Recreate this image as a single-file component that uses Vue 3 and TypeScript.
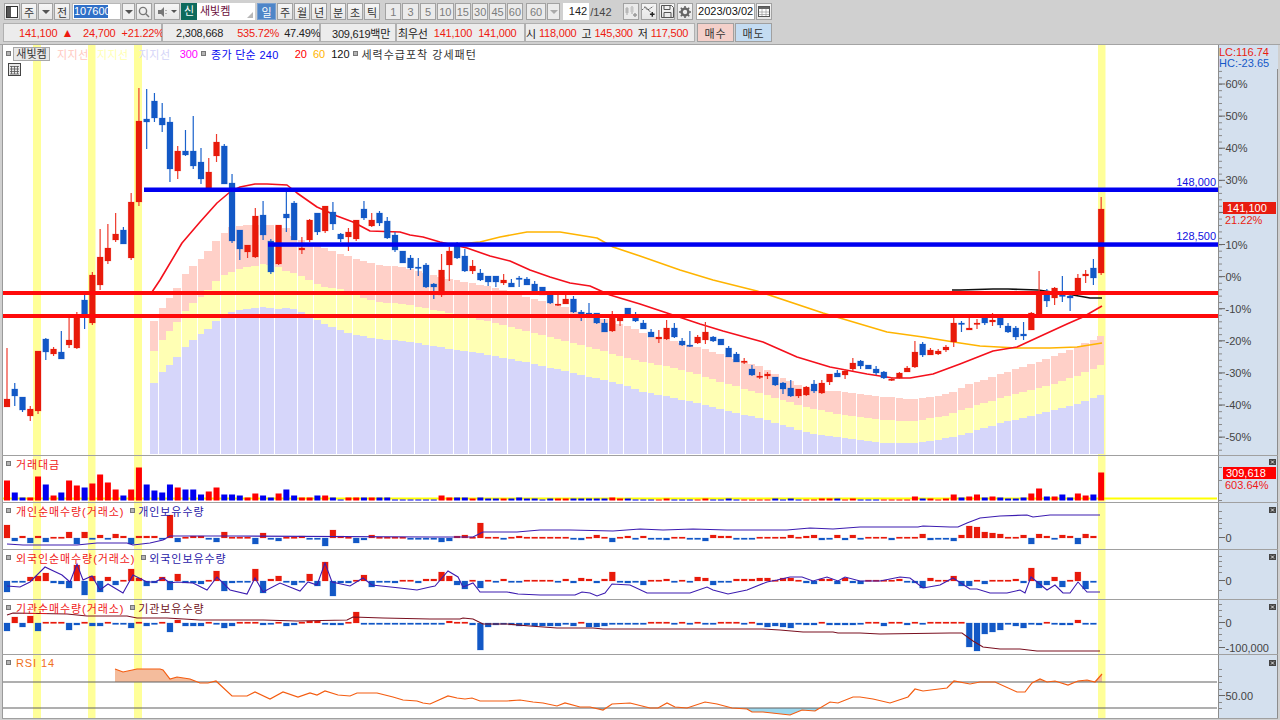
<script setup lang="ts">
type Legend = { text: string; color: string; bullet?: boolean }
type Bar = { x: number; y: number; h: number; up: boolean }

const step = 7.76
const xAt = (i: number) => 7 + step * i
const pts = (a: number[][]) => a.map(p => p.join(',')).join(' ')

// pixel data read from the chart: [up, bodyTop, bodyBottom, high, low]
const candleRows: number[][] = [
  [1,399,407,348,407],[0,389,396,383,406],[0,397,410,397,412],[1,409,416,406,421],[1,351,411,351,414],
  [0,339,352,338,360],[1,349,354,347,356],[0,352,359,331,359],[1,340,345,318,348],[1,318,348,312,349],
  [0,300,314,295,329],[1,275,323,272,325],[1,257,285,229,290],[1,248,261,224,264],[1,234,240,213,242],
  [0,230,244,227,244],[1,202,258,193,260],[1,121,202,88,206],[0,119,122,89,149],[0,101,118,93,122],
  [0,118,125,103,132],[0,122,169,117,182],[1,151,171,146,179],[0,151,155,130,156],[0,151,166,116,169],
  [0,162,179,148,184],[1,172,188,158,188],[1,142,156,134,162],[0,146,184,144,184],[0,183,241,174,243],
  [0,230,249,230,260],[1,245,252,245,258],[1,216,257,208,258],[0,215,235,201,240],[0,241,272,239,274],
  [1,225,264,225,265],[0,214,218,192,232],[0,203,240,201,240],[1,248,250,237,254],[1,220,240,219,242],
  [0,213,232,213,235],[1,206,231,206,233],[0,212,224,202,230],[0,234,239,233,242],[1,232,237,228,251],
  [1,220,239,220,241],[0,209,218,201,220],[1,220,226,213,227],[0,213,223,211,226],[0,221,238,217,239],
  [0,235,250,232,252],[0,251,263,251,263],[0,258,268,255,270],[0,267,268,258,276],[0,265,287,263,288],
  [0,284,287,283,299],[1,270,295,254,297],[1,251,265,247,281],[0,246,258,242,259],[0,256,271,249,272],
  [1,266,271,260,274],[0,273,280,269,281],[0,276,282,276,286],[0,276,282,276,287],[1,280,283,274,285],
  [0,283,287,279,287],[0,278,279,276,287],[0,279,285,277,285],[0,284,291,281,291],[0,287,295,287,295],
  [0,295,303,295,304],[1,304,305,295,306],[1,299,304,295,304],[0,299,312,296,313],[0,312,315,310,321],
  [0,313,315,303,317],[0,313,323,313,324],[0,323,332,319,332],[1,316,331,311,332],[1,315,321,315,326],
  [0,308,316,308,316],[0,315,321,312,322],[0,323,329,320,329],[0,332,337,329,337],[1,337,339,330,343],
  [1,328,339,320,340],[0,328,337,323,338],[0,341,345,338,346],[0,345,346,331,347],[1,337,343,335,344],
  [1,332,340,322,344],[0,337,341,336,342],[0,339,345,339,345],[0,348,357,346,357],[0,354,362,352,362],
  [1,361,362,358,364],[0,369,375,365,376],[1,376,377,372,379],[1,374,376,372,379],[0,377,385,377,386],
  [0,383,389,382,394],[0,388,396,380,397],[1,389,396,389,398],[1,387,395,386,396],[0,384,391,380,393],
  [1,383,393,380,394],[1,374,382,374,385],[0,373,377,370,377],[1,371,375,369,379],[1,363,369,358,371],
  [0,361,366,360,369],[0,365,369,365,369],[0,369,373,366,375],[0,372,378,371,379],[1,379,380,377,381],
  [1,373,378,372,379],[1,368,372,366,372],[1,352,367,341,368],[0,344,355,342,357],[1,350,355,348,355],
  [1,351,354,349,355],[1,347,350,345,352],[1,323,342,318,347],[0,323,324,321,332],[1,328,330,317,330],
  [1,323,324,319,329],[0,317,323,317,325],[1,320,322,313,326],[0,317,325,317,328],[0,326,332,323,333],
  [0,328,337,326,340],[0,334,336,322,340],[1,313,330,312,330],[1,293,314,271,315],[0,295,301,289,307],
  [1,288,298,287,305],[0,295,296,276,302],[0,296,298,295,311],[1,278,292,274,292],[1,274,276,270,283],
  [0,268,278,259,285],[1,209,273,197,275],
]
const candles = candleRows.map((r, i) => ({ x: xAt(i), up: r[0] === 1, top: r[1], bot: r[2], hi: r[3], lo: r[4] }))

// x, pink top, yellow top, lavender top
const bandKeys: number[][] = [
  [150,321,351,383],[158,308,340,372],[166,298,331,365],[174,287,321,356],[181,274,311,347],[189,266,303,340],
  [197,259,297,334],[205,250,289,328],[212,241,281,321],[220,233,275,315],[228,227,272,312],[236,226,269,310],
  [244,225,267,309],[252,225,266,308],[260,225,264,307],[268,225,265,308],[275,226,267,309],[283,228,271,308],
  [291,237,273,309],[298,240,276,312],[320,248,287,324],[340,255,290,332],[372,265,302,339],[400,267,304,341],
  [440,278,312,348],[487,287,322,355],[520,296,330,362],[570,310,343,373],[620,325,357,385],[640,333,362,392],
  [680,343,370,400],[720,355,383,410],[760,368,394,419],[800,388,407,432],[840,392,415,438],[880,397,420,443],
  [910,399,421,443],[945,394,415,438],[960,386,409,434],[1000,373,397,422],[1040,360,387,413],[1070,348,377,405],
  [1105,333,362,392],
]
function bandAt(x: number, col: number) {
  let k = 0
  while (k < bandKeys.length - 2 && bandKeys[k + 1][0] < x) k++
  const a = bandKeys[k], b = bandKeys[k + 1]
  const t = Math.min(1, Math.max(0, (x - a[0]) / (b[0] - a[0])))
  return Math.round(a[col] + (b[col] - a[col]) * t)
}
const bands = Array.from({ length: 123 }, (_, j) => {
  const x0 = Math.round(150 + step * j)
  const x1 = Math.min(1105, Math.round(150 + step * (j + 1)))
  const gap = j % 5 === 1 || j % 5 === 4 ? 1 : 0
  return { x: x0 + gap, w: x1 - x0 - gap, pink: bandAt(x0, 1), yellow: bandAt(x0, 2), lav: bandAt(x0, 3) }
})

const highlights = [[33, 8], [88, 7.5], [134, 8], [1098, 7.5]]

const ma20: number[][] = [
  [152,292],[160,280],[182,243],[200,222],[217,203],[230,192],[240,187],[255,184],[267,184],[287,185],[297,193],[317,207],
  [337,216],[353,222],[370,231],[400,232],[410,235],[423,237],[440,242],[467,248],[490,256],[510,261],[530,270],[550,277],
  [570,283],[590,286],[610,295],[640,304],[667,313],[700,324],[723,331],[763,342],[797,357],[830,367],[867,374],[893,378],
  [910,378],[933,374],[960,364],[993,351],[1017,347],[1043,335],[1067,324],[1083,317],[1102,306],
]
const ma60: number[][] = [
  [458,244],[480,242],[500,237],[527,232],[560,232],[597,238],[613,247],[640,256],[680,270],[713,280],[757,291],[823,313],
  [887,332],[923,337],[960,343],[980,346],[1017,348],[1050,348],[1077,347],[1102,343],
]
const ma120: number[][] = [[952,290],[960,290],[993,289],[1008,289],[1038,290],[1073,295],[1090,298],[1102,298]]

// the 20% label sits behind the price tag, so it is left out
const mainTicks = [60, 50, 40, 30, 20, 10, 0, -10, -20, -30, -40, -50].map((v, i) => ({ v, y: 84 + i * 32.1, label: v !== 20 }))
const minorTicks = Array.from({ length: 63 }, (_, i) => 65 + i * 6.42)

const volRows = [
  20,-8,-3,3,24,-16,5,-8,20,15, -13,17,26,18,11,-5,11,33,-16,-10, -8,-16,13,-11,-11,-6,9,13,-6,-6,
  -5,3,7,-5,-3,7,-11,-5,3,3, -5,5,-3,-1,3,3,-3,3,-3,-3, -1,-1,-1,-1,-1,-1,5,3,-3,-3,
  2,-3,-2,-2,2,-2,-3,-2,-2,-1, -2,2,2,-2,-2,-2,-2,-2,3,2, -2,-1,-1,-1,1,2,-1,-1,-1,1,
  2,-1,-1,-2,-1,1,1,1,1,-2, -1,-2,-1,1,1,2,2,-2,1,2, -1,-1,-1,1,1,1,1,4,-2,2,
  1,2,6,-3,4,6,-3,4,-3,-2, -2,-3,7,12,-4,4,-6,-3,7,5,-6,28,
]
const indivRows = [
  13,-3,2,-5,2,-4,1,1,6,-6, 6,-1,3,-1,4,2,-6,2,2,2, -1,23,-4,1,2,2,-1,-4,6,1,
  1,1,-6,5,-1,-3,1,1,2,-1, -1,-8,8,2,1,-5,-2,3,1,1, 1,1,-1,-1,-1,-1,-4,-3,2,3,
  1,15,1,1,-1,1,2,1,1,1, 1,1,1,-1,-2,1,3,1,-4,1, 2,-1,2,-1,-1,-2,1,1,-1,-1,
  -3,3,2,2,-1,-1,-1,1,1,1, 1,3,1,2,3,-2,-1,3,-2,3, -1,1,1,1,-2,1,1,1,4,-2,
  -1,-1,-3,3,12,11,6,5,4,1, 1,3,-6,4,2,-1,3,2,-6,4,2,0,
]
const foreignRows = [
  -11,-1,-1,4,5,8,-2,-3,-7,16, -14,5,-11,4,-4,1,12,3,-5,-2, 4,-9,7,-2,-2,-3,1,10,-10,-2,
  -1,-1,12,-12,2,5,-1,-4,-1,7, -5,19,-15,-2,-2,1,6,-6,-1,-1, -2,1,1,-2,2,2,9,5,-4,-8,
  1,-7,1,-1,2,-1,-1,1,1,1, 1,-1,2,-2,3,2,-2,2,9,-1, -2,-1,-4,1,1,2,-1,1,-1,4,
  3,-4,-1,-1,2,2,2,3,3,1, 3,3,1,-2,-3,2,2,-3,3,-2, -3,1,1,1,1,2,-1,-2,-7,3,
  1,1,5,-5,-5,1,-3,1,1,1, 2,-2,13,-7,-4,4,-6,1,9,-8,-1,0,
]
const instRows = [
  -8,6,-4,7,-8,1,1,1,-7,-2, 1,-3,-3,1,-1,-1,-5,1,-3,-1, 1,-9,3,-3,-3,-3,1,-1,-5,-3,
  1,1,1,-2,-1,1,-3,-2,1,2, 2,-1,-2,-2,1,11,-1,-1,-1,-1, -1,-1,-1,-1,-1,-1,-1,2,1,1,
  -2,-27,-4,-2,-1,-2,-3,-2,-3,-3, -3,-3,-1,-3,1,-4,-4,-3,-1,-1, -1,-1,-1,1,1,1,-1,1,-1,1,
  -1,-1,1,1,1,-1,1,-2,-4,-3, -4,-5,-1,-2,-2,1,-2,-2,-2,-2, -1,1,1,-3,1,1,-2,1,-1,1,
  1,1,1,1,-24,-28,-11,-9,-7,-1, -3,-5,-1,-2,1,-1,-2,-2,3,-1,-1,0,
]

function toBars(rows: number[], zero: number): Bar[] {
  return rows.flatMap((v, i) => v === 0 ? [] : [{
    x: xAt(i) - 3,
    y: v > 0 ? zero - v : zero,
    h: Math.max(1.5, Math.abs(v)),
    up: v > 0,
  }])
}
// volume bars all stand on the base line, sign only gives the colour
function toVolBars(rows: number[], base: number): Bar[] {
  return rows.map((v, i) => {
    const h = Math.max(1, Math.abs(v))
    return { x: xAt(i) - 3, y: base - h, h, up: v > 0 }
  })
}

const indivLine: number[][] = [
  [7,544],[23,545],[47,545],[77,545],[97,543],[127,543],[133,545],[150,543],[163,540],[170,536],[233,536],[430,537],[473,537],
  [483,532],[517,532],[540,530],[570,530],[613,531],[640,529],[663,530],[693,529],[727,530],[787,530],[810,528],[833,529],
  [860,527],[918,527],[923,526],[950,527],[958,527],[967,523],[980,518],[1000,516],[1027,515],[1033,517],[1050,515],[1100,515],
]
const foreignLine: number[][] = [
  [7,586],[20,587],[30,582],[45,567],[62,575],[70,582],[77,564],[83,580],[92,576],[100,590],[108,584],[123,593],[133,575],
  [147,582],[155,582],[163,578],[170,583],[177,582],[193,583],[207,590],[217,577],[230,590],[247,594],[255,578],[263,592],
  [280,583],[300,591],[308,582],[317,585],[325,563],[332,582],[350,586],[363,578],[372,585],[400,588],[417,590],[430,587],
  [435,586],[448,571],[458,577],[463,587],[473,583],[480,592],[507,592],[518,594],[540,595],[560,595],[575,595],[582,592],
  [590,593],[597,596],[605,593],[612,584],[630,585],[647,593],[690,593],[707,587],[713,590],[728,594],[747,590],[767,582],
  [777,580],[790,577],[802,577],[813,581],[827,577],[838,581],[845,577],[860,581],[880,581],[900,577],[910,578],[923,588],
  [940,585],[953,578],[970,589],[977,589],[990,593],[1007,593],[1020,590],[1025,593],[1031,577],[1047,590],[1055,585],
  [1063,593],[1070,593],[1078,582],[1087,592],[1100,592],
]
const instLine: number[][] = [
  [7,615],[13,613],[67,614],[87,616],[127,616],[137,618],[167,618],[200,620],[263,620],[297,621],[347,620],[353,617],[383,618],
  [430,619],[460,619],[463,618],[473,619],[483,624],[507,624],[530,626],[557,628],[593,628],[603,629],[763,629],[780,630],
  [803,632],[833,632],[838,633],[860,633],[880,634],[950,633],[962,633],[973,641],[983,647],[1000,649],[1020,649],[1037,651],[1100,651],
]
const rsiLine: number[][] = [
  [115,669],[123,672],[137,669],[160,669],[163,670],[170,679],[177,677],[190,679],[200,683],[208,683],[216,681],[232,696],
  [247,696],[255,692],[270,699],[283,692],[298,697],[310,693],[317,695],[325,691],[338,695],[350,696],[357,693],[377,693],
  [393,697],[403,700],[417,701],[423,703],[430,704],[448,696],[457,698],[465,699],[472,698],[480,701],[507,701],[520,700],
  [533,702],[543,703],[557,706],[565,703],[580,707],[590,707],[603,710],[612,704],[630,703],[650,708],[658,708],[667,703],
  [675,707],[687,708],[705,702],[717,704],[732,708],[747,709],[752,712],[763,712],[790,715],[802,710],[815,711],[830,702],
  [838,703],[853,697],[860,697],[873,699],[890,703],[908,697],[915,689],[923,691],[947,688],[954,681],[970,684],[980,682],
  [995,682],[1017,692],[1025,692],[1032,683],[1040,679],[1047,682],[1055,681],[1068,685],[1078,681],[1087,680],[1095,682],[1102,674],
]
const rsiFirst = rsiLine[0][0]
const rsiLast = rsiLine[rsiLine.length - 1][0]
const closeTo = (y: number) => pts([[rsiFirst, y], ...rsiLine, [rsiLast, y]])

const subPanes = [
  {
    id: 'vol', top: 456, h: 46,
    legend: [{ text: '거래대금', color: '#f01818' }] as Legend[],
    bars: toVolBars(volRows, 500.5), barKind: 'vivid',
    line: null as number[][] | null, lineColor: '',
    ticks: [467, 480, 493, 500], labels: [] as { y: number; t: string }[], close: 461,
  },
  {
    id: 'indiv', top: 503, h: 46,
    legend: [{ text: '개인순매수량(거래소)', color: '#f01818' }, { text: '개인보유수량', color: '#2818a8', bullet: true }] as Legend[],
    bars: toBars(indivRows, 538), barKind: 'soft',
    line: indivLine, lineColor: '#3c1cb0',
    ticks: [511, 518, 523, 528], labels: [{ y: 537, t: '0' }], close: 509,
  },
  {
    id: 'foreign', top: 550, h: 49,
    legend: [{ text: '외국인순매수량(거래소)', color: '#f01818' }, { text: '외국인보유수량', color: '#2818a8', bullet: true }] as Legend[],
    bars: toBars(foreignRows, 581), barKind: 'soft',
    line: foreignLine, lineColor: '#3c1cb0',
    ticks: [556, 561, 566, 572, 590], labels: [{ y: 580, t: '0' }], close: 556,
  },
  {
    id: 'inst', top: 600, h: 54,
    legend: [{ text: '기관순매수량(거래소)', color: '#f01818' }, { text: '기관보유수량', color: '#701020', bullet: true }] as Legend[],
    bars: toBars(instRows, 623), barKind: 'soft',
    line: instLine, lineColor: '#7a1020',
    ticks: [604, 610, 616, 628, 634, 640], labels: [{ y: 622, t: '0' }, { y: 647, t: '-100,000' }], close: 606,
  },
  {
    id: 'rsi', top: 655, h: 63,
    legend: [{ text: 'RSI 14', color: '#f07020' }] as Legend[],
    bars: [] as Bar[], barKind: 'soft',
    line: null as number[][] | null, lineColor: '',
    ticks: [669, 676, 682, 689, 702, 708], labels: [{ y: 695, t: '50.00' }], close: 662,
  },
]

const periods = ['1', '3', '5', '10', '15', '30', '45', '60']
</script>

<template>
  <div class="app">
    <header class="tools">
      <div class="row row-top">
        <button class="btn w16">
          <svg width="12" height="12" viewBox="0 0 12 12"><rect x="0.5" y="0.5" width="11" height="11" fill="#fff" stroke="#333"/><rect x="1" y="1" width="4" height="10" fill="#555"/></svg>
        </button>
        <button class="btn w16">주</button>
        <button class="btn w15"><i class="caret"></i></button>
        <button class="btn w16">전</button>
        <div class="code ml1"><span>107600</span></div>
        <button class="btn w13 flat"><i class="caret"></i></button>
        <button class="btn w16">
          <svg width="12" height="12" viewBox="0 0 12 12" fill="none" stroke="#777" stroke-width="1.4"><circle cx="5" cy="5" r="3.6"/><path d="M7.8 7.8 11 11"/></svg>
        </button>
        <button class="btn w26 ml1">
          <svg width="11" height="12" viewBox="0 0 11 12"><path d="M0 4h3l3-3v10L3 8H0z" fill="#777"/><path d="M8 4v1M8 7v1" stroke="#777"/></svg>
          <i class="caret small"></i>
        </button>
        <span class="badge">신</span>
        <div class="name">새빛켐<i class="corner"></i></div>
        <button class="btn w19 on ml1">일</button>
        <button class="btn w16">주</button>
        <button class="btn w16">월</button>
        <button class="btn w16">년</button>
        <button class="btn w16 ml2">분</button>
        <button class="btn w16">초</button>
        <button class="btn w16">틱</button>
        <button v-for="(p, i) in periods" :key="i" class="btn wp off" :class="{ ml4: i === 0 }">{{ p }}</button>
        <button class="btn w20 off ml2">60</button>
        <button class="btn w13 off"><i class="caret pale"></i></button>
        <div class="count ml2">142</div>
        <span class="of">/142</span>
        <button class="btn w16 off ml6">
          <svg width="14" height="13" viewBox="0 0 14 13"><path d="M3 2v8M8 1v8" stroke="#aaa"/><rect x="1.5" y="3" width="3" height="5" fill="#b8b8b8"/><rect x="6.5" y="2" width="3" height="5" fill="#c8c8c8"/><path d="M11 8v4M9 10h4" stroke="#999" stroke-width="1.4"/></svg>
        </button>
        <button class="btn w16 ml1">
          <svg width="15" height="13" viewBox="0 0 15 13" fill="none" stroke="#555"><path d="M0 5 3 2l3 3 3-2 3-2" stroke-dasharray="2 1"/><path d="M3 1l3 3 3 3"/><path d="M11 7v5M8.500 9.500h5" stroke="#222" stroke-width="1.500"/></svg>
        </button>
        <button class="btn w16 ml1">
          <svg width="13" height="13" viewBox="0 0 13 13" fill="none" stroke="#555"><path d="M.5.5h10l2 2v10H.5z"/><path d="M3 .5v4h6v-4M3 12.500v-5h7v5"/></svg>
        </button>
        <button class="btn w16 ml1">
          <svg width="12" height="12" viewBox="0 0 12 12"><circle cx="6" cy="6" r="3.4" fill="none" stroke="#666" stroke-width="2.4"/><path d="M6 0v2.4M6 9.6V12M0 6h2.4M9.6 6H12M1.8 1.8l1.7 1.7M8.5 8.5l1.7 1.7M10.2 1.8 8.5 3.5M3.5 8.5l-1.7 1.7" stroke="#666" stroke-width="1.6"/></svg>
        </button>
        <div class="date ml2">2023/03/02</div>
        <button class="btn w16">
          <svg width="12" height="11" viewBox="0 0 12 11"><rect x=".5" y=".5" width="11" height="10" fill="#fff" stroke="#555"/><rect x="1" y="1" width="10" height="2" fill="#666"/><path d="M1 6h10M1 8.500h10M4 3v7M8 3v7" stroke="#999" stroke-width=".7"/></svg>
        </button>
      </div>
      <div class="row row-quote">
        <div class="cell c-price">
          <span class="red">141,100</span><span class="red arrow">▲</span>
          <span class="red m10">24,700</span><span class="red m6">+21.22%</span>
        </div>
        <div class="cell c-vol">
          <span>2,308,668</span><span class="red m14">535.72%</span><span class="m5">47.49%</span>
        </div>
        <div class="cell c-amt"><span>309,619백만</span></div>
        <div class="cell c-best">
          <span>최우선</span><span class="red m6">141,100</span><span class="red m6">141,000</span>
        </div>
        <div class="cell c-ohl">
          <span>시</span><span class="red m3">118,000</span><span class="m5">고</span><span class="red m3">145,300</span><span class="m5">저</span><span class="red m3">117,500</span>
        </div>
        <button class="order buy">매수</button>
        <button class="order sell">매도</button>
      </div>
    </header>

    <section class="chart">
      <div class="pane main-pane">
        <div class="plot">
          <svg class="canvas" width="1215" height="410" viewBox="3 45 1215 410">
            <rect v-for="h in highlights" :key="h[0]" :x="h[0]" y="45" :width="h[1]" height="410" class="hl"/>
            <g shape-rendering="crispEdges">
              <g v-for="b in bands" :key="b.x">
                <rect :x="b.x" :y="b.pink" :width="b.w" :height="b.yellow - b.pink" fill="#ffd0c8"/>
                <rect :x="b.x" :y="b.yellow" :width="b.w" :height="b.lav - b.yellow" fill="#ffffb4"/>
                <rect :x="b.x" :y="b.lav" :width="b.w" :height="454 - b.lav" fill="#d6d6fa"/>
              </g>
            </g>
            <polyline :points="pts(ma120)" class="ma" stroke="#111"/>
            <polyline :points="pts(ma60)" class="ma" stroke="#ffb400"/>
            <polyline :points="pts(ma20)" class="ma" stroke="#f4101c"/>
            <g v-for="(c, i) in candles" :key="i">
              <line :x1="c.x" :x2="c.x" :y1="c.hi" :y2="c.lo" :stroke="c.up ? '#ee3a2c' : '#1a62cc'" stroke-width="1.2"/>
              <rect :x="c.x - 3" :y="c.top" width="6" :height="Math.max(1.5, c.bot - c.top)" :class="c.up ? 'up' : 'down'"/>
            </g>
            <rect x="144" y="187.500" width="1074" height="4.500" fill="#0000f0"/>
            <rect x="268" y="242.300" width="950" height="4.500" fill="#0000f0"/>
            <rect x="3" y="291" width="1215" height="4" fill="#ff0a0a"/>
            <rect x="3" y="314" width="1215" height="4" fill="#ff0a0a"/>
            <text x="1216" y="186" text-anchor="end" fill="#1010e0">148,000</text>
            <text x="1216" y="240" text-anchor="end" fill="#1010e0">128,500</text>
          </svg>
          <div class="legend main-legend">
            <i class="bullet"></i>
            <span class="stock">새빛켐</span>
            <span class="l-pink">지지선</span>
            <span class="l-yellow">지지선</span>
            <span class="l-lav">지지선</span>
            <span class="l-mag">300</span>
            <i class="bullet b1"></i>
            <span class="l-blue">종가 단순 240</span>
            <span class="l-red">20</span>
            <span class="l-orange">60</span>
            <span class="l-black">120</span>
            <i class="bullet b1"></i>
            <span class="l-dark">세력수급포착 강세패턴</span>
          </div>
          <svg class="table-icon" width="13" height="13" viewBox="0 0 13 13">
            <rect x=".5" y=".5" width="12" height="12" fill="#e8e8e8" stroke="#444"/>
            <path d="M2 3.500h9M2 6h9M2 8.500h9M2 11h9M3.500 3v8M6.500 3v8M9.500 3v8" stroke="#555" stroke-width=".8"/>
          </svg>
        </div>
        <div class="axis">
          <svg class="canvas" width="59" height="410" viewBox="1219 45 59 410">
            <line v-for="y in minorTicks" :key="y" x1="1219" x2="1222" :y1="y" :y2="y" class="tick minor"/>
            <g v-for="t in mainTicks" :key="t.v">
              <line x1="1219" x2="1225" :y1="t.y" :y2="t.y" class="tick"/>
              <text v-if="t.label" x="1225.500" :y="t.y + 4" class="ax">{{ t.v }}%</text>
            </g>
            <rect x="1219" y="45" width="59" height="24" fill="#d4e0ee"/>
            <text x="1219" y="56" fill="#e81c10">LC:116.74</text>
            <text x="1219" y="67" fill="#1458c8">HC:-23.65</text>
            <rect x="1223" y="202" width="53" height="12" fill="#e81c10"/>
            <text x="1227" y="211.500" fill="#fff">141,100</text>
            <text x="1225" y="223.500" fill="#e81c10">21.22%</text>
          </svg>
        </div>
      </div>

      <div v-for="p in subPanes" :key="p.id" class="pane" :style="{ height: p.h + 1 + 'px' }">
        <div class="plot">
          <svg class="canvas" width="1215" :height="p.h" :viewBox="`3 ${p.top} 1215 ${p.h}`">
            <rect v-for="h in highlights" :key="h[0]" :x="h[0]" :y="p.top" :width="h[1]" :height="p.h" class="hl"/>
            <template v-if="p.id === 'vol'">
              <rect x="3" y="497.500" width="1214" height="2" fill="#ffff00"/>
            </template>
            <template v-if="p.id === 'rsi'">
              <clipPath id="rsi-over"><rect x="3" y="655" width="1215" height="27"/></clipPath>
              <clipPath id="rsi-under"><rect x="3" y="708" width="1215" height="10"/></clipPath>
              <polygon :points="closeTo(682)" fill="#f4bc9c" clip-path="url(#rsi-over)"/>
              <polygon :points="closeTo(708)" fill="#9cd8ee" clip-path="url(#rsi-under)"/>
              <rect x="3" y="681.500" width="1214" height="1" fill="#606060"/>
              <rect x="3" y="707.500" width="1214" height="1" fill="#606060"/>
              <polyline :points="pts(rsiLine)" fill="none" stroke="#f45c10" stroke-width="1.2"/>
            </template>
            <rect v-for="(b, i) in p.bars" :key="i" :x="b.x" :y="b.y" width="6" :height="b.h"
                  :class="p.barKind === 'vivid' ? (b.up ? 'v-up' : 'v-down') : (b.up ? 'up' : 'down')"/>
            <polyline v-if="p.line" :points="pts(p.line)" fill="none" :stroke="p.lineColor" stroke-width="1.1"/>
          </svg>
          <div class="legend sub-legend">
            <template v-for="(l, i) in p.legend" :key="i">
              <i class="bullet" :class="{ next: i > 0 }"></i>
              <span :style="{ color: l.color }">{{ l.text }}</span>
            </template>
          </div>
        </div>
        <div class="axis">
          <svg class="canvas" width="59" :height="p.h" :viewBox="`1219 ${p.top} 59 ${p.h}`">
            <line v-for="y in p.ticks" :key="y" x1="1219" x2="1222" :y1="y + 0.5" :y2="y + 0.5" class="tick minor"/>
            <g v-for="l in p.labels" :key="l.t">
              <line x1="1219" x2="1225" :y1="l.y + 0.5" :y2="l.y + 0.5" class="tick"/>
              <text x="1225.500" :y="l.y + 4.5" class="ax">{{ l.t }}</text>
            </g>
            <template v-if="p.id === 'vol'">
              <rect x="1223" y="467" width="53" height="12" fill="#ff0000"/>
              <text x="1226" y="476.500" fill="#fff">309,618</text>
              <text x="1225" y="488.500" fill="#f01818">603.64%</text>
            </template>
            <g :transform="`translate(1269 ${p.close - 2})`">
              <rect width="7" height="6" fill="#444"/>
              <path d="M2 1.500 5 4.500M5 1.500 2 4.500" stroke="#eee" stroke-width=".9"/>
            </g>
          </svg>
        </div>
      </div>
    </section>
  </div>
</template>

<style scoped>
.app {
  width: 1280px;
  height: 720px;
  overflow: hidden;
  display: flex;
  flex-direction: column;
  background: #d0d0d0;
  font: 11px "Liberation Sans", "Noto Sans CJK KR", sans-serif;
  color: #222;
}

.tools { height: 44px; border-bottom: 1px solid #a4a4a4; flex: none; }
.row { display: flex; align-items: center; }
.row-top { height: 22px; padding: 1px 0 0 4px; box-sizing: border-box; gap: 1px; }
.row-quote { height: 22px; padding: 1px 0 2px 3px; box-sizing: border-box; letter-spacing: -0.2px; }

.btn {
  display: flex;
  align-items: center;
  justify-content: center;
  gap: 2px;
  height: 17px;
  padding: 0;
  box-sizing: border-box;
  flex: none;
  border: 1px solid #a2a2a2;
  background: linear-gradient(#f6f6f6, #e6e6e6);
  font: inherit;
  color: #333;
}
.btn.on { background: #4f86c8; color: #fff; border-color: #7aa0d0; }
.btn.off { color: #7c7c7c; background: #ebebeb; }
.btn.flat { background: #f0f0f0; }
.w13 { width: 13px; } .w15 { width: 15px; } .w16 { width: 16px; } .w19 { width: 19px; }
.w20 { width: 20px; } .w26 { width: 26px; } .wp { width: 16.4px; }
.ml1 { margin-left: 1px; } .ml2 { margin-left: 2px; } .ml4 { margin-left: 4px; } .ml6 { margin-left: 6px; }

.caret { width: 0; height: 0; border: 4px solid transparent; border-top: 4px solid #555; border-bottom: 0; }
.caret.small { border-width: 3px 3px 0; border-top-color: #555; }
.caret.pale { border-top-color: #aaa; }

.code { width: 49px; height: 17px; box-sizing: border-box; background: #fff; border: 1px solid #b8b8b8; padding: 1px; }
.code span { display: block; width: 34px; height: 13px; line-height: 13px; background: #3070c8; color: #fff; }
.badge { width: 16px; height: 17px; line-height: 17px; text-align: center; background: #0e6a5c; color: #fff; }
.name {
  position: relative;
  width: 58px;
  height: 17px;
  line-height: 17px;
  box-sizing: border-box;
  padding-left: 3px;
  margin-left: -1px;
  background: #fff;
  color: #6a0c3a;
  font-size: 11px;
}
.corner {
  position: absolute;
  right: 2px;
  bottom: 2px;
  border-left: 6px solid transparent;
  border-bottom: 6px solid #b8b8b8;
}
.count { width: 26px; height: 17px; line-height: 17px; box-sizing: border-box; padding-right: 2px; text-align: right; background: #fff; }
.of { width: 26px; color: #444; }
.date { width: 59px; height: 17px; line-height: 15px; box-sizing: border-box; border: 1px solid #a8a8a8; background: #fff; text-align: center; color: #111; }

.cell {
  display: flex;
  align-items: center;
  height: 19px;
  box-sizing: border-box;
  border: 1px solid #b0b0b0;
  background: #ececec;
  flex: none;
  white-space: nowrap;
}
.c-price { width: 159px; padding-left: 15px; }
.c-vol { width: 158px; padding-left: 13px; }
.c-amt { width: 76px; padding-left: 11px; }
.c-best { width: 129px; padding-left: 1px; }
.c-ohl { width: 170px; padding-left: 0; }
.red { color: #ee1a10; }
.arrow { margin-left: 4px; font-size: 12px; }
.m3 { margin-left: 3px; } .m5 { margin-left: 5px; } .m6 { margin-left: 6px; } .m10 { margin-left: 10px; } .m14 { margin-left: 14px; }
.order { width: 37px; height: 19px; padding: 0; margin-left: 2px; font: inherit; letter-spacing: 1px; border: 1px solid #a0a0a0; color: #333; }
.order.sell { margin-left: 1px; }
.buy { background: #f4d0ca; }
.sell { background: #c4dcf2; }

.chart { flex: none; padding-left: 2px; width: 1278px; box-sizing: border-box; }
.pane { display: flex; box-sizing: border-box; border-bottom: 1px solid #a0a0a0; }
.main-pane { height: 411px; }
.plot {
  position: relative;
  width: 1216px;
  box-sizing: border-box;
  border-left: 1px solid #9a9a9a;
  background: #fff;
  flex: none;
}
.axis {
  width: 60px;
  box-sizing: border-box;
  border-left: 1px solid #8c8c8c;
  border-right: 1px solid #8c8c8c;
  background: #d4e0ee;
  flex: none;
}
.canvas { display: block; font: inherit; }
.canvas text { font: inherit; }
.hl { fill: #ffff99; }
.ma { fill: none; stroke-width: 1.6; stroke-linejoin: round; }
.up { fill: #e81a0a; stroke: rgba(232, 26, 10, 0.25); stroke-width: 0.7; }
.down { fill: #1258c6; stroke: rgba(18, 88, 198, 0.3); stroke-width: 0.7; }
.v-up { fill: #ff0000; }
.v-down { fill: #0000f0; }
.tick { stroke: #666; stroke-width: 1; }
.tick.minor { stroke: #8a8a8a; }
.ax { fill: #444; }

.legend {
  position: absolute;
  top: 0;
  left: 0;
  height: 15px;
  display: flex;
  align-items: center;
  gap: 2px;
  padding-left: 3px;
  white-space: nowrap;
}
.bullet { width: 3px; height: 3px; background: #b4b4b4; border: 1px solid #777; flex: none; }
.bullet.b1 { margin-left: 1px; }
.bullet.next { margin-left: 3px; }
.main-legend { top: 1px; }
.sub-legend { letter-spacing: 0.9px; gap: 3px; }
.sub-legend .bullet:first-child { margin-right: 2px; }
.stock { width: 37px; height: 14px; line-height: 13px; text-align: center; box-sizing: border-box; border: 1px solid #a8a8a8; background: #e8e8e8; color: #333; }
.l-pink { color: #ffc8be; margin-left: 5px; letter-spacing: 0.5px; }
.l-yellow { color: #ffffb0; margin-left: 6px; letter-spacing: 0.5px; }
.l-lav { color: #d4d4f8; margin-left: 8px; letter-spacing: 0.5px; }
.l-mag { color: #ff00ff; margin-left: 7px; }
.l-blue { color: #0a0af0; margin-left: 3px; letter-spacing: 0.3px; }
.l-red { color: #ff0000; margin-left: 14px; }
.l-orange { color: #ffb400; margin-left: 4px; }
.l-black { color: #111; margin-left: 4px; }
.l-dark { color: #333; margin-left: 2px; letter-spacing: 1px; }
.table-icon { position: absolute; left: 5px; top: 18px; }
</style>

<style>
html, body { margin: 0; background: #d0d0d0; overflow: hidden; }
</style>
